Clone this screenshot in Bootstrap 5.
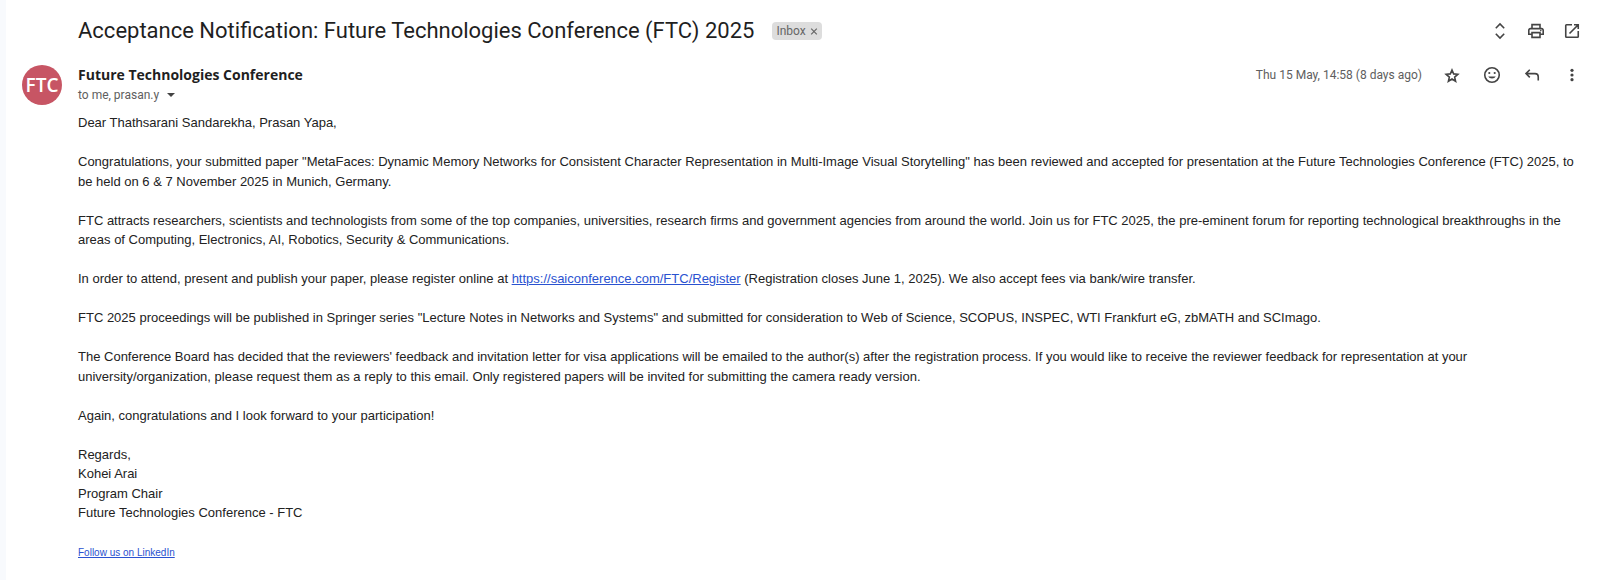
<!DOCTYPE html>
<html lang="en">
<head>
<meta charset="utf-8">
<meta name="viewport" content="width=device-width, initial-scale=1">
<title>Acceptance Notification: Future Technologies Conference (FTC) 2025</title>
<link href="https://cdn.jsdelivr.net/npm/bootstrap@5.3.0/dist/css/bootstrap.min.css" rel="stylesheet">
<style>
  body { background: #f8fafd; color: #222; font: 13px/1.5 "Liberation Sans", Arial, sans-serif; }
  .mail { margin-left: 6px; padding: 16px 20px 16px 16px; background: #fff; }
  .avatar-col { width: 56px; }
  .subject { font: 400 22px/30px Roboto, sans-serif; color: #1f1f1f; }
  .inbox-chip { background: #ddd; color: #666; font: 12px/18px Roboto, sans-serif; height: 18px; border-radius: 4px; padding: 0 4px; margin-left: 18px; }
  .icon-btn { width: 20px; height: 20px; color: #444; line-height: 0; }
  .icon-btn svg { width: 20px; height: 20px; fill: currentColor; }
  .icon-btn .outline { fill: none; stroke: currentColor; stroke-width: 1.6; }
  .message { margin-top: 19px; }
  .message-actions { gap: 20px; }
  .avatar { width: 40px; height: 40px; background: #c75564; color: #fff; font: 600 19px/40px "Open Sans", sans-serif; }
  .sender { font: 700 14px/20px "Open Sans", sans-serif; color: #1f1f1f; }
  .meta { font: 12px/20px Roboto, sans-serif; color: #5e5e5e; }
  .letter { padding-top: 8px; }
  .letter p { margin-bottom: 1.5em; }
  .letter a { color: #2a52d0; }
  .letter .follow { font-size: 10px; line-height: 20px; }
</style>
</head>
<body>
<main class="mail min-vh-100">
  <header class="d-flex align-items-center">
    <div class="avatar-col flex-shrink-0"></div>
    <h1 class="subject mb-0">Acceptance Notification: Future Technologies Conference (FTC) 2025</h1>
    <button type="button" class="inbox-chip border-0 d-flex align-items-center gap-1">Inbox <svg width="8" height="8" viewBox="0 0 8 8" stroke="currentColor" stroke-width="1.2" fill="none"><path d="M1.2 1.7l5.6 5.6M6.8 1.7l-5.6 5.6"/></svg></button>
    <div class="d-flex gap-3 ms-auto">
      <button type="button" class="icon-btn btn p-0 border-0" aria-label="Expand all"><svg viewBox="0 0 20 20"><path class="outline" d="M5.8 7.2L10 3l4.2 4.2M5.8 12.8L10 17l4.2-4.2"/></svg></button>
      <button type="button" class="icon-btn btn p-0 border-0" aria-label="Print all"><svg viewBox="-0.5 -0.5 25 25"><path d="M19 8h-1V3H6v5H5c-1.66 0-3 1.34-3 3v6h4v4h12v-4h4v-6c0-1.66-1.34-3-3-3zM8 5h8v3H8V5zm8 12v2H8v-4h8v2zm2-2v-2H6v2H4v-4c0-.55.45-1 1-1h14c.55 0 1 .45 1 1v4h-2z"/><circle cx="18" cy="11.5" r="1"/></svg></button>
      <button type="button" class="icon-btn btn p-0 border-0" aria-label="Open in new window"><svg viewBox="0 0 20 20"><path class="outline" d="M10 3.75H4.5a.75.75 0 0 0-.75.75v11a.75.75 0 0 0 .75.75h11a.75.75 0 0 0 .75-.75V10M12 3.75h4.25V8M16.25 3.75L7.5 12.5"/></svg></button>
    </div>
  </header>
  <div class="message d-flex">
    <div class="avatar-col flex-shrink-0"><div class="avatar rounded-circle text-center">FTC</div></div>
    <div class="flex-grow-1">
      <div class="message-actions d-flex align-items-center">
        <h2 class="sender mb-0">Future Technologies Conference</h2>
        <time class="meta ms-auto">Thu 15 May, 14:58 (8 days ago)</time>
        <button type="button" class="icon-btn btn p-0 border-0" aria-label="Star"><svg viewBox="0 0 20 20"><path class="outline" d="M10 5l1.65 3.9 4.2.4-3.2 2.8.95 4.15L10 14.05l-3.6 2.2.95-4.15-3.2-2.8 4.2-.4z"/></svg></button>
        <button type="button" class="icon-btn btn p-0 border-0" aria-label="Add reaction"><svg viewBox="0 0 20 20"><circle class="outline" cx="10" cy="10" r="7.25"/><circle cx="7.3" cy="8" r="1.1"/><circle cx="12.7" cy="8" r="1.1"/><path d="M6.2 11.5h7.6a4.1 3.4 0 0 1-7.6 0z"/></svg></button>
        <button type="button" class="icon-btn btn p-0 border-0" aria-label="Reply"><svg viewBox="0 0 20 20"><path class="outline" d="M7.8 4.8L4 8.6l3.8 3.8M4 8.6h9a3.25 3.25 0 0 1 3.25 3.25V15.5"/></svg></button>
        <button type="button" class="icon-btn btn p-0 border-0" aria-label="More"><svg viewBox="0 0 20 20"><circle cx="10" cy="5.3" r="1.6"/><circle cx="10" cy="10" r="1.6"/><circle cx="10" cy="14.7" r="1.6"/></svg></button>
      </div>
      <button type="button" class="meta btn p-0 border-0 rounded-0 d-flex align-items-center gap-2">to me, prasan.y <svg width="8" height="4" viewBox="0 0 8 4" fill="#444"><path d="M0 0h8L4 4z"/></svg></button>
      <article class="letter">
        <p>Dear Thathsarani Sandarekha, Prasan Yapa,</p>
        <p>Congratulations, your submitted paper "MetaFaces: Dynamic Memory Networks for Consistent Character Representation in Multi-Image Visual Storytelling" has been reviewed and accepted for presentation at the Future Technologies Conference (FTC) 2025, to be held on 6 &amp; 7 November 2025 in Munich, Germany.</p>
        <p>FTC attracts researchers, scientists and technologists from some of the top companies, universities, research firms and government agencies from around the world. Join us for FTC 2025, the pre-eminent forum for reporting technological breakthroughs in the areas of Computing, Electronics, AI, Robotics, Security &amp; Communications.</p>
        <p>In order to attend, present and publish your paper, please register online at <a href="https://saiconference.com/FTC/Register">https://saiconference.com/FTC/Register</a> (Registration closes June 1, 2025). We also accept fees via bank/wire transfer.</p>
        <p>FTC 2025 proceedings will be published in Springer series "Lecture Notes in Networks and Systems" and submitted for consideration to Web of Science, SCOPUS, INSPEC, WTI Frankfurt eG, zbMATH and SCImago.</p>
        <p>The Conference Board has decided that the reviewers' feedback and invitation letter for visa applications will be emailed to the author(s) after the registration process. If you would like to receive the reviewer feedback for representation at your university/organization, please request them as a reply to this email. Only registered papers will be invited for submitting the camera ready version.</p>
        <p>Again, congratulations and I look forward to your participation!</p>
        <p>Regards,<br>Kohei Arai<br>Program Chair<br>Future Technologies Conference - FTC</p>
        <a href="#" class="follow">Follow us on LinkedIn</a>
      </article>
    </div>
  </div>
</main>
<script src="https://cdn.jsdelivr.net/npm/bootstrap@5.3.0/dist/js/bootstrap.bundle.min.js"></script>
</body>
</html>
